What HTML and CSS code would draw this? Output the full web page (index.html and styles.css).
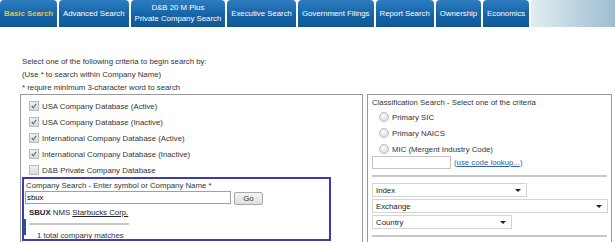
FILE: index.html
```html
<!DOCTYPE html>
<html lang="en">
<head>
  <meta charset="UTF-8">
  <title>Company Search</title>
  <link rel="stylesheet" href="styles.css">
</head>
<body>

  <nav class="tabs">
    <a class="tab active">Basic Search</a>
    <a class="tab">Advanced Search</a>
    <a class="tab">D&amp;B 20 M Plus<br>Private Company Search</a>
    <a class="tab">Executive Search</a>
    <a class="tab">Government Filings</a>
    <a class="tab">Report Search</a>
    <a class="tab">Ownership</a>
    <a class="tab">Economics</a>
    <div class="tab-fill"></div>
  </nav>

  <main>
    <div class="intro">
      <p>Select one of the following criteria to begin search by:</p>
      <p>(Use * to search within Company Name)</p>
      <p>* require minimum 3-character word to search</p>
    </div>

    <div class="columns">
      <section class="box left">
        <label class="check-row"><span class="check on"><svg viewBox="0 0 9 9"><path d="M2 4.5 L3.8 6.5 L7 2" /></svg></span>USA Company Database (Active)</label>
        <label class="check-row"><span class="check on"><svg viewBox="0 0 9 9"><path d="M2 4.5 L3.8 6.5 L7 2" /></svg></span>USA Company Database (Inactive)</label>
        <label class="check-row"><span class="check on"><svg viewBox="0 0 9 9"><path d="M2 4.5 L3.8 6.5 L7 2" /></svg></span>International Company Database (Active)</label>
        <label class="check-row"><span class="check on"><svg viewBox="0 0 9 9"><path d="M2 4.5 L3.8 6.5 L7 2" /></svg></span>International Company Database (Inactive)</label>
        <label class="check-row"><span class="check"></span>D&amp;B Private Company Database</label>

        <div class="company-search">
          <div class="cs-label">Company Search - Enter symbol or Company Name *</div>
          <div class="cs-input-row">
            <div class="text-input wide">sbux</div>
            <div class="go-btn">Go</div>
          </div>
          <div class="suggest">
            <div class="suggest-item"><b>SBUX</b> NMS <u>Starbucks Corp.</u></div>
            <div class="suggest-rule"></div>
            <div class="suggest-total">1 total company matches</div>
          </div>
        </div>
      </section>

      <section class="box right">
        <div class="cls-title">Classification Search - Select one of the criteria</div>
        <label class="radio-row"><span class="radio"></span>Primary SIC</label>
        <label class="radio-row"><span class="radio"></span>Primary NAICS</label>
        <label class="radio-row"><span class="radio"></span>MIC (Mergent Industry Code)</label>
        <div class="code-row">
          <div class="text-input code"></div>
          <a class="lookup">(<u>use code lookup...</u>)</a>
        </div>
        <hr class="rule">
        <div class="select s-index"><span>Index</span><i class="arrow"></i></div>
        <div class="select s-exchange"><span>Exchange</span><i class="arrow"></i></div>
        <div class="select s-country"><span>Country</span><i class="arrow"></i></div>
        <hr class="rule">
        <div class="search-btn"></div>
      </section>
    </div>
  </main>

</body>
</html>
```

FILE: styles.css
```css
body {
  margin: 0;
  font-family: "Liberation Sans", Arial, sans-serif;
  font-size: 7.8px;
  color: #333;
  background: #fff;
  overflow: hidden;
}

.tabs {
  display: flex;
  gap: 2px;
  height: 27px;
}

.tab {
  display: flex;
  align-items: center;
  justify-content: center;
  padding: 0 4px;
  text-align: center;
  line-height: 11px;
  color: #fff;
  font-size: 7.8px;
  background: linear-gradient(#2d7cc0, #1563a6 60%, #115a98);
  border-radius: 4px 4px 0 0;
  border-bottom: 1px solid #0d4f88;
}

.tab.active {
  color: #e8c23c;
  font-weight: bold;
}

.tab-fill {
  flex: 1;
  background: linear-gradient(to right, #e2edf3, #b8d0de 60%, #9ebdd0);
}

main {
  padding-top: 28px;
}

.intro {
  padding-left: 22px;
}

.intro p {
  margin: 0;
  line-height: 13px;
}

.columns {
  display: flex;
  gap: 4px;
  padding-left: 20px;
}

.box {
  flex: none;
  border: 1px solid #999;
  border-bottom: none;
  height: 160px;
}

.box.left {
  width: 341px;
  padding-top: 3px;
}

.box.right {
  width: 235px;
  padding: 2px 4px 0 4px;
}

.check-row {
  display: flex;
  align-items: center;
  height: 16px;
  padding-left: 8px;
}

.check {
  width: 8px;
  height: 8px;
  margin-right: 3px;
  border: 1px solid #b8b8b8;
  background: linear-gradient(#f0f0f0, #dcdcdc);
}

.check svg {
  display: block;
  width: 8px;
  height: 8px;
}

.check svg path {
  fill: none;
  stroke: #5a6a8a;
  stroke-width: 1.3;
}

.company-search {
  width: 304px;
  margin: -1px 0 0 1px;
  border: 2px solid #3c3cb0;
  padding: 1px 0 0 1px;
  height: 59px;
}

.cs-label {
  line-height: 11px;
  padding-left: 1px;
}

.cs-input-row {
  display: flex;
  gap: 3px;
}

.text-input {
  height: 11px;
  border: 1px solid #a0a0a0;
  background: #fff;
  color: #000;
  line-height: 11px;
  padding-left: 1px;
}

.text-input.wide {
  width: 203px;
}

.go-btn {
  width: 27px;
  height: 11px;
  margin-top: 1px;
  border: 1px solid #a8a8a8;
  border-radius: 2px;
  background: linear-gradient(#f6f6f6, #dedede);
  text-align: center;
  line-height: 11px;
}

.suggest {
  position: relative;
  padding: 1px 0 0 4px;
}

.suggest::before {
  content: "";
  position: absolute;
  left: -1px;
  top: 14px;
  width: 2px;
  height: 16px;
  background: #1d5d7a;
}

.suggest-item {
  line-height: 13px;
  color: #222;
}

.suggest-rule {
  width: 100px;
  height: 2px;
  margin-top: 4px;
  background: #c8c8c8;
}

.suggest-total {
  padding-left: 8px;
  margin-top: 5px;
  line-height: 11px;
}

.cls-title {
  line-height: 12px;
}

.radio-row {
  display: flex;
  align-items: center;
  height: 16px;
  padding-left: 7px;
}

.radio {
  width: 8px;
  height: 8px;
  margin-right: 3px;
  border: 1px solid #bcbcbc;
  border-radius: 50%;
  background: radial-gradient(circle at 40% 35%, #fafafa, #d6d6d6);
}

.code-row {
  display: flex;
  align-items: center;
  gap: 3px;
  margin-top: -1px;
}

.text-input.code {
  width: 76px;
  border-color: #c4c4c4;
}

.lookup {
  color: #3060a8;
}

.lookup u {
  text-decoration-color: #3060a8;
}

.rule {
  margin: 6px 0;
  border: none;
  border-top: 2px solid #c8c8c8;
}

.select {
  display: flex;
  align-items: center;
  justify-content: space-between;
  height: 12px;
  margin-bottom: 2px;
  padding: 0 5px 0 3px;
  border: 1px solid #d4d4d4;
  color: #222;
}

.s-index {
  width: 145px;
}

.s-exchange {
  width: 226px;
}

.s-country {
  width: 130px;
}

.arrow {
  width: 0;
  height: 0;
  border-left: 3px solid transparent;
  border-right: 3px solid transparent;
  border-top: 3px solid #222;
}

.search-btn {
  width: 32px;
  height: 8px;
  margin: 0 auto;
  border: 1px solid #b0b0b0;
  border-bottom: none;
}
```
